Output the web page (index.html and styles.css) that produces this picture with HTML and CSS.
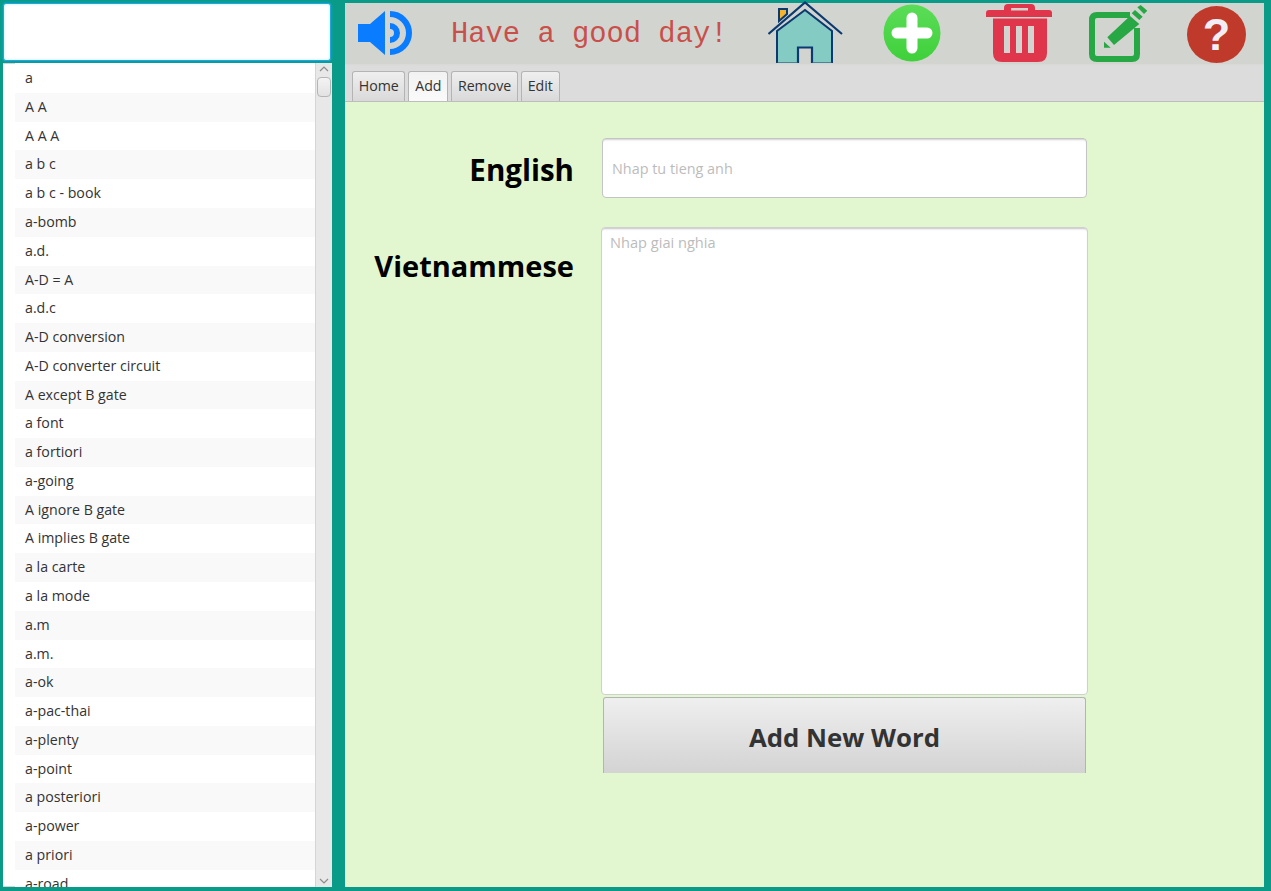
FILE: index.html
```html
<!DOCTYPE html>
<html lang="en">
<head>
    <meta charset="UTF-8">
    <meta name="viewport" content="width=device-width, initial-scale=1.0">
    <title>Dictionary</title>
    <link rel="stylesheet" href="styles.css">
</head>
<body>

<div class="app">
    <div class="side">
        <input type="text" class="search">
        <div class="word-box">
            <ul class="word-list">
                <li>a</li>
                <li>A A</li>
                <li>A A A</li>
                <li>a b c</li>
                <li>a b c - book</li>
                <li>a-bomb</li>
                <li>a.d.</li>
                <li>A-D = A</li>
                <li>a.d.c</li>
                <li>A-D conversion</li>
                <li>A-D converter circuit</li>
                <li>A except B gate</li>
                <li>a font</li>
                <li>a fortiori</li>
                <li>a-going</li>
                <li>A ignore B gate</li>
                <li>A implies B gate</li>
                <li>a la carte</li>
                <li>a la mode</li>
                <li>a.m</li>
                <li>a.m.</li>
                <li>a-ok</li>
                <li>a-pac-thai</li>
                <li>a-plenty</li>
                <li>a-point</li>
                <li>a posteriori</li>
                <li>a-power</li>
                <li>a priori</li>
                <li>a-road</li>
            </ul>
            <div class="scrollbar">
                <svg class="arrow" width="10" height="6" viewBox="0 0 10 6"><path d="M1 5 L5 1 L9 5" fill="none" stroke="#8c8c8c" stroke-width="1.2"/></svg>
                <div class="thumb"></div>
                <div class="track"></div>
                <svg class="arrow" width="10" height="6" viewBox="0 0 10 6"><path d="M1 1 L5 5 L9 1" fill="none" stroke="#8c8c8c" stroke-width="1.2"/></svg>
            </div>
        </div>
    </div>

    <div class="main">
        <div class="toolbar">
            <svg class="icon-sound" width="57" height="46" viewBox="0 0 57 46">
                <path d="M1 14 H13 L28 1 V45 L13 32 H1 Z" fill="#0a7cff"/>
                <path d="M33 16 A7 7 0 0 1 33 30" fill="none" stroke="#0a7cff" stroke-width="6"/>
                <path d="M33 4 A19 19 0 0 1 33 42" fill="none" stroke="#0a7cff" stroke-width="6"/>
            </svg>
            <div class="greeting">Have a good day!</div>
            <svg class="icon-home" width="75" height="64" viewBox="0 0 75 64">
                <path d="M11 20 V8 H19 V13 Z" fill="#f6b42c" stroke="#0b3a70" stroke-width="2"/>
                <path d="M0.500 33 L37 1.500 L74 33" fill="none" stroke="#0b3a70" stroke-width="2.200"/>
                <path d="M9 62.500 V30 L37 9 L64 30 V62.500 Z" fill="#84cbc4" stroke="#0b3a70" stroke-width="2"/>
                <path d="M30 63 V46.500 H44 V63 Z" fill="#d2d4d0" stroke="#0b3a70" stroke-width="2.200"/>
                <path d="M9 62.500 H30 M44 62.500 H64" stroke="#4d8aa0" stroke-width="1.500"/>
            </svg>
            <svg class="icon-add" width="58" height="58" viewBox="0 0 58 58">
                <defs>
                    <linearGradient id="addFill" x1="0" y1="0" x2="0" y2="1">
                        <stop offset="0" stop-color="#5bdd57"/>
                        <stop offset="1" stop-color="#3fd03b"/>
                    </linearGradient>
                </defs>
                <circle cx="29" cy="29" r="28.500" fill="url(#addFill)"/>
                <path d="M29 14 V44 M14 29 H44" stroke="#fff" stroke-width="11" stroke-linecap="round"/>
            </svg>
            <svg class="icon-trash" width="66" height="58" viewBox="0 0 66 58">
                <path fill-rule="evenodd" d="M18 6 V4 Q18 0 22 0 H45 Q49 0 49 4 V6 H63 Q66 6 66 9 V13 H0 V9 Q0 6 3 6 Z M25 4 V6.500 H42 V4 Z" fill="#e0364c"/>
                <path fill-rule="evenodd" d="M7 14.500 H61 V49 Q61 58 52 58 H16 Q7 58 7 49 Z M18 22 V49 H24 V22 Z M30 22 V49 H36 V22 Z M42 22 V49 H48 V22 Z" fill="#e0364c"/>
            </svg>
            <svg class="icon-edit" width="60" height="60" viewBox="0 0 60 60">
                <path d="M41 10 H8 Q3 10 3 15 V49 Q3 54 8 54 H43 Q48 54 48 49 V23" fill="none" stroke="#28a745" stroke-width="6"/>
                <path d="M18.300 32.300 L41 11 L50.300 19 L25 40 Z M15 36.700 V42.700 H21.700 Z M42.700 8.300 L46 5 L53.700 11.700 L50.300 15 Z M48.300 2.300 L51.700 0 L58.300 5.700 L55 9 Z" fill="#28a745"/>
            </svg>
            <div class="help">?</div>
        </div>

        <div class="tabs">
            <div class="tab">Home</div>
            <div class="tab active">Add</div>
            <div class="tab">Remove</div>
            <div class="tab">Edit</div>
        </div>

        <div class="content">
            <div class="form-row english-row">
                <label class="form-label">English</label>
                <input type="text" class="english" placeholder="Nhap tu tieng anh">
            </div>
            <div class="form-row meaning-row">
                <label class="form-label">Vietnammese</label>
                <div class="meaning-col">
                    <textarea class="meaning" placeholder="Nhap giai nghia"></textarea>
                    <button class="add-btn">Add New Word</button>
                </div>
            </div>
        </div>
    </div>
</div>

</body>
</html>
```

FILE: styles.css
```css
* {
    box-sizing: border-box;
}
html, body {
    margin: 0;
    height: 100%;
    overflow: hidden;
}
body {
    background: #0a9b88;
    font-family: "Open Sans", "Noto Sans", sans-serif;
    color: #333;
}
.app {
    display: flex;
    height: 891px;
    padding: 3px 7px 4px 3px;
}

/* left column */
.side {
    width: 329px;
    margin-right: 13px;
    display: flex;
    flex-direction: column;
}
.search {
    display: block;
    width: 328px;
    height: 58px;
    margin: 0;
    background: #fff;
    border: 1px solid #1fa6da;
    border-radius: 3px;
    box-shadow: inset 0 0 3px #bfe6f7, 0 0 0 1.500px #079fa5;
    outline: none;
}
.word-box {
    flex: 1;
    min-height: 0;
    margin-top: 2px;
    display: flex;
    background: #fff;
    overflow: hidden;
}
.word-list {
    flex: 1;
    list-style: none;
    margin: 0;
    padding: 1.200px 0 0 12px;
    overflow: hidden;
    font-size: 14.2px;
    background:
        linear-gradient(#d4d4d4, #d4d4d4) 0 0 / 12px 1px no-repeat,
        linear-gradient(#d4d4d4, #d4d4d4) 0 100% / 12px 1px no-repeat;
}
.word-list li {
    height: 28.77px;
    line-height: 28px;
    padding-left: 10px;
    white-space: nowrap;
}
.word-list li:nth-child(even) {
    background: #f9f9f9;
}
.scrollbar {
    width: 17px;
    display: flex;
    flex-direction: column;
    align-items: center;
    background: #e8e8e8;
    border-left: 1px solid #d5d5d5;
    padding: 3px 0;
}
.arrow {
    flex: none;
}
.thumb {
    width: 14px;
    height: 20px;
    margin-top: 5px;
    background: linear-gradient(#f4f4f4, #e2e2e2);
    border: 1px solid #b5b5b5;
    border-radius: 4px;
}
.track {
    flex: 1;
}

/* right panel */
.main {
    flex: 1;
    display: flex;
    flex-direction: column;
    min-width: 0;
}
.toolbar {
    height: 60px;
    flex: none;
    display: flex;
    align-items: flex-start;
    background: #d2d4d0;
    padding-left: 12px;
}
.icon-sound {
    flex: none;
    margin-top: 7px;
}
.greeting {
    width: 275px;
    margin-left: 37px;
    margin-top: 14px;
    font-family: "Liberation Mono", monospace;
    font-size: 28.8px;
    line-height: 36px;
    color: #c9504a;
    white-space: nowrap;
    flex: none;
}
.icon-home {
    flex: none;
    margin-left: 42px;
    margin-top: -2px;
}
.icon-add {
    flex: none;
    margin-left: 40px;
    margin-top: 1px;
}
.icon-trash {
    flex: none;
    margin-left: 45px;
    margin-top: 1px;
}
.icon-edit {
    flex: none;
    margin-left: 37px;
    margin-top: 2px;
}
.help {
    flex: none;
    width: 59px;
    height: 57px;
    margin-left: 38px;
    margin-top: 3px;
    border-radius: 50%;
    background: #c03a2b;
    color: #f1eff5;
    font-family: "Liberation Sans", sans-serif;
    font-weight: bold;
    font-size: 45px;
    line-height: 57px;
    text-align: center;
}
.tabs {
    height: 39px;
    flex: none;
    display: flex;
    align-items: flex-end;
    gap: 3px;
    background: #dcdcdc;
    border-bottom: 1px solid #bdbdbd;
    padding-left: 7px;
    box-shadow: inset 0 2px 2px -1px #d0d0cc;
}
.tab {
    height: 30px;
    padding: 0 5.700px;
    font-size: 14.2px;
    line-height: 28px;
    color: #333;
    background: linear-gradient(#efefef, #d9d9d9);
    border: 1px solid #b4b4b4;
    border-bottom: none;
    border-radius: 3px 3px 0 0;
}
.tab.active {
    background: linear-gradient(#f2f2f2, #fafafa);
}
.content {
    flex: 1;
    background: #e2f7d0;
    padding-top: 36px;
}
.form-row {
    display: flex;
    align-items: flex-start;
}
.form-label {
    width: 229px;
    font-size: 29px;
    font-weight: bold;
    color: #000;
    text-align: right;
    flex: none;
}
.english-row .form-label {
    font-size: 29.5px;
    line-height: 64px;
}
.english {
    display: block;
    width: 485px;
    height: 60px;
    margin: 0 0 0 28px;
    padding: 0 9px;
    font-family: inherit;
    font-size: 14.4px;
    background: #fff;
    border: 1px solid #c4c4c4;
    border-radius: 4px;
    box-shadow: inset 0 2px 2px -1px #d0d0d0;
    outline: none;
}
.english::placeholder, .meaning::placeholder {
    color: #bcbcbc;
    opacity: 1;
}
.meaning-row {
    margin-top: 25px;
}
.meaning-row .form-label {
    line-height: 78px;
}
.meaning-col {
    margin-left: 27px;
    width: 487px;
    display: flex;
    flex-direction: column;
}
.meaning {
    display: block;
    width: 487px;
    height: 468px;
    margin: 0;
    padding: 4px 8px;
    font-family: inherit;
    font-size: 14.6px;
    background: #fff;
    border: 1px solid #d0d0d0;
    border-radius: 4px;
    box-shadow: inset 0 2px 2px -1px #c4c4c4;
    resize: none;
    outline: none;
}
.add-btn {
    display: block;
    width: 483px;
    height: 76px;
    margin: 2px 0 0 2px;
    padding: 2px 0 0;
    font-family: inherit;
    font-size: 25.8px;
    font-weight: bold;
    color: #333;
    background: linear-gradient(#efefef, #d3d3d3);
    border: 1px solid #b4b4b4;
    border-bottom: none;
    border-radius: 3px 3px 0 0;
}
```
